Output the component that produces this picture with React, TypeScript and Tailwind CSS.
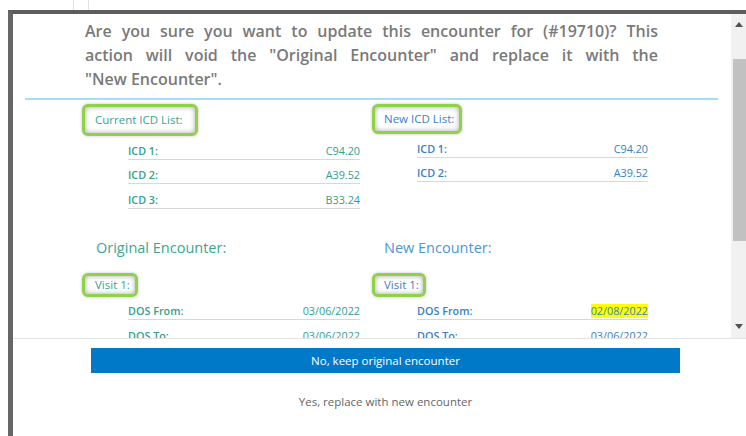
import React from 'react'

const font = { fontFamily: '"Open Sans", "Liberation Sans", sans-serif' }

type Row = { label: string; value: string; mark?: boolean }

const currentIcd: Row[] = [
  { label: 'ICD 1:', value: 'C94.20' },
  { label: 'ICD 2:', value: 'A39.52' },
  { label: 'ICD 3:', value: 'B33.24' },
]

const newIcd: Row[] = [
  { label: 'ICD 1:', value: 'C94.20' },
  { label: 'ICD 2:', value: 'A39.52' },
]

const originalVisit: Row[] = [
  { label: 'DOS From:', value: '03/06/2022' },
  { label: 'DOS To:', value: '03/06/2022' },
]

const newVisit: Row[] = [
  { label: 'DOS From:', value: '02/08/2022', mark: true },
  { label: 'DOS To:', value: '03/06/2022' },
]

// green outlined tag around a section label
function Tag({ children, color }: { children: React.ReactNode; color: string }) {
  return (
    <div
      className={`inline-flex items-center border-[3px] border-[#8fd24a] rounded-[6px] bg-white shadow-[inset_0_0_5px_rgba(0,0,0,0.35),0_0_3px_rgba(0,0,0,0.25)] text-[11.5px] ${color}`}
    >
      {children}
    </div>
  )
}

function Rows({ rows, color, className }: { rows: Row[]; color: string; className: string }) {
  return (
    <div className={`-mt-[1px] ${className}`}>
      {rows.map(r => (
        <div
          key={r.label}
          className={`h-[24.5px] flex items-end justify-between border-b-[1.5px] border-[#d8d8d8] pb-[1px] text-[10.8px] leading-[14px] ${color}`}
        >
          <span className="font-semibold">{r.label}</span>
          <span className={r.mark ? 'bg-[#ffff00]' : ''}>{r.value}</span>
        </div>
      ))}
    </div>
  )
}

export default function App() {
  return (
    <div className="w-[746px] h-[436px] bg-white relative overflow-hidden" style={font}>
      {/* page behind the dialog */}
      <div className="h-[10px] relative">
        <div className="absolute left-[73px] top-0 w-px h-[10px] bg-[#e2e2e2]" />
        <div className="absolute left-[88px] top-0 w-px h-[10px] bg-[#e2e2e2]" />
      </div>

      <div className="ml-[8px] h-[426px] flex flex-col border-l-[5px] border-t-[4px] border-l-[#666] border-t-[#5d5d5d] bg-white">
        {/* scrollable body */}
        <div className="h-[324px] flex shrink-0">
          <div className="flex-1 overflow-hidden">
            <div className="ml-[72px] w-[573px] pt-[5px] text-[16px] leading-[24px] font-semibold text-[#7a7a7a] whitespace-nowrap">
              <div className="text-justify [text-align-last:justify]">Are you sure you want to update this encounter for (#19710)? This</div>
              <div className="text-justify [text-align-last:justify]">action will void the "Original Encounter" and replace it with the</div>
              <div>"New Encounter".</div>
            </div>
            <div className="ml-[12px] w-[693px] mt-[7px] h-[2px] bg-[#a6dcf7]" />

            <div className="grid grid-cols-[290px_290px] pl-[69px] pt-[4px]">
              <div>
                <Tag color="text-[#3aa391]">
                  <span className="pl-[10px] pr-[12px] leading-[26px]">Current ICD List:</span>
                </Tag>
                <Rows rows={currentIcd} color="text-[#32a08c]" className="ml-[46px] w-[232px]" />
              </div>
              <div>
                <Tag color="text-[#3c7fc1]">
                  <span className="pl-[9px] pr-[5px] leading-[24px]">New ICD List:</span>
                </Tag>
                <Rows rows={newIcd} color="text-[#3a7ec2]" className="ml-[45px] w-[231px]" />
              </div>
            </div>

            <div className="grid grid-cols-[290px_290px] pl-[69px]">
              <div className="mt-[29px]">
                <div className="ml-[14px] text-[14.5px] leading-[20px] text-[#3aa693]">Original Encounter:</div>
                <div className="mt-[13px]">
                  <Tag color="text-[#3aa391]">
                    <span className="pl-[10px] pr-[5px] leading-[18px]">Visit 1:</span>
                  </Tag>
                </div>
                <Rows rows={originalVisit} color="text-[#32a08c]" className="ml-[46px] w-[232px]" />
              </div>
              <div className="mt-[29px]">
                <div className="ml-[12px] text-[14.5px] leading-[20px] text-[#4a97d2]">New Encounter:</div>
                <div className="mt-[13px]">
                  <Tag color="text-[#3c7fc1]">
                    <span className="pl-[9px] pr-[4px] leading-[18px]">Visit 1:</span>
                  </Tag>
                </div>
                <Rows rows={newVisit} color="text-[#3a7ec2]" className="ml-[45px] w-[231px]" />
              </div>
            </div>
          </div>

          {/* scrollbar */}
          <div className="w-[15px] bg-[#f1f1f1] flex flex-col items-center">
            <svg width="8" height="5" viewBox="0 0 8 5" className="mt-[8px]">
              <path d="M0 5 L4 0 L8 5 Z" fill="#505050" />
            </svg>
            <div className="mt-[32px] ml-[2px] w-[13px] h-[182px] bg-[#c1c1c1]" />
            <svg width="8" height="5" viewBox="0 0 8 5" className="mt-auto mb-[9px]">
              <path d="M0 0 L8 0 L4 5 Z" fill="#505050" />
            </svg>
          </div>
        </div>

        {/* actions */}
        <div className="border-t border-[#e3e3e3]">
          <div className="ml-[78px] w-[589px]">
            <button className="mt-[9px] w-full h-[25px] bg-[#0079c9] text-white text-[11.5px]">
              No, keep original encounter
            </button>
            <div className="mt-[22px] text-center text-[11.5px] leading-[14px] text-[#666]">
              Yes, replace with new encounter
            </div>
          </div>
        </div>
      </div>
    </div>
  )
}
